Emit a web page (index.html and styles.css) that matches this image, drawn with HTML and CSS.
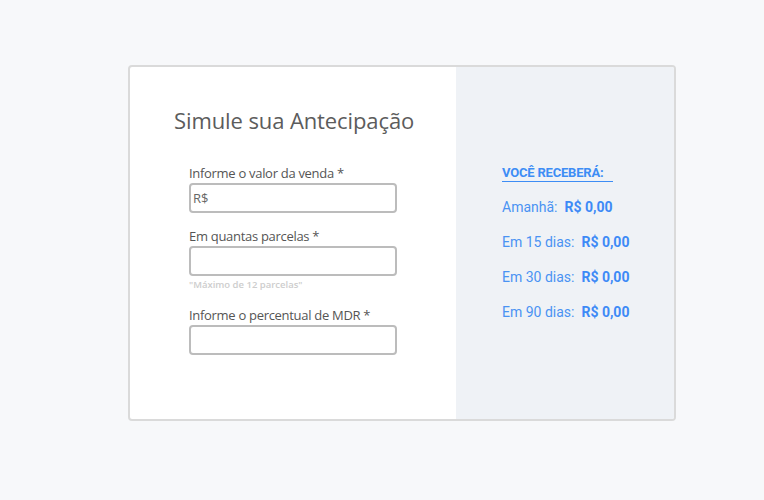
FILE: index.html
```html
<!DOCTYPE html>
<html lang="pt-BR">
<head>
<meta charset="utf-8">
<link rel="stylesheet" href="styles.css">
</head>
<body>
<div class="card">
  <section class="form-panel">
    <h1 class="title">Simule sua Antecipação</h1>
    <div class="fields">
      <div class="field">
        <label class="label">Informe o valor da venda *</label>
        <div class="input"><span class="prefix">R$</span></div>
      </div>
      <div class="field">
        <label class="label">Em quantas parcelas *</label>
        <div class="input"></div>
        <span class="hint">"Máximo de 12 parcelas"</span>
      </div>
      <div class="field">
        <label class="label">Informe o percentual de MDR *</label>
        <div class="input"></div>
      </div>
    </div>
  </section>
  <aside class="result-panel">
    <h2 class="result-title">VOCÊ RECEBERÁ:&nbsp;&nbsp;&nbsp;</h2>
    <ul class="results">
      <li>Amanhã:&nbsp; <strong>R$ 0,00</strong></li>
      <li>Em 15 dias:&nbsp; <strong>R$ 0,00</strong></li>
      <li>Em 30 dias:&nbsp; <strong>R$ 0,00</strong></li>
      <li>Em 90 dias:&nbsp; <strong>R$ 0,00</strong></li>
    </ul>
  </aside>
</div>
</body>
</html>
```
FILE: styles.css
```css
* { box-sizing: border-box; }
html, body { margin: 0; padding: 0; }
body {
  background: #f7f8fa;
  font-family: "Open Sans", "Noto Sans", sans-serif;
  padding: 65px 0 0 128px;
}
.card {
  width: 548px;
  height: 356px;
  border: 2px solid #dadada;
  border-radius: 4px;
  background: #ffffff;
  display: flex;
  overflow: hidden;
}
.form-panel {
  width: 326px;
  padding: 38px 0 0 44px;
}
.title {
  margin: 0;
  font-weight: 400;
  font-size: 22px;
  line-height: 30px;
  color: #5c5c5c;
  letter-spacing: -0.1px;
}
.fields {
  padding: 29px 0 0 15px;
  display: flex;
  flex-direction: column;
  gap: 14px;
}
.field { display: flex; flex-direction: column; }
.label {
  font-size: 13px;
  line-height: 18px;
  margin-bottom: 1px;
  color: #555;
  letter-spacing: -0.3px;
}
.input {
  width: 208px;
  height: 30px;
  border: 2px solid #bcbcbc;
  border-radius: 4px;
  display: flex;
  align-items: center;
  padding-left: 2px;
}
.prefix { font-size: 13px; color: #666; }
.hint {
  margin-top: 3px;
  font-size: 9.5px;
  line-height: 12px;
  color: #cdcdcd;
  font-weight: 600;
  margin-bottom: 1px;
}
.result-panel {
  flex: 1;
  background: #eff2f6;
  padding: 95px 0 0 46px;
  font-family: Roboto, "Liberation Sans", sans-serif;
  color: #3d8df5;
}
.result-title {
  margin: 0;
  font-size: 13px;
  font-weight: 700;
  line-height: 16px;
  display: inline-block;
  border-bottom: 1.5px solid #3d8df5;
  letter-spacing: -0.2px;
}
.results {
  list-style: none;
  margin: 17px 0 0;
  padding: 0;
  display: flex;
  flex-direction: column;
  gap: 18px;
}
.results li {
  font-size: 14px;
  line-height: 17px;
  color: #4a93f3;
}
.results strong { color: #3d8af6; font-weight: 700; }
```
